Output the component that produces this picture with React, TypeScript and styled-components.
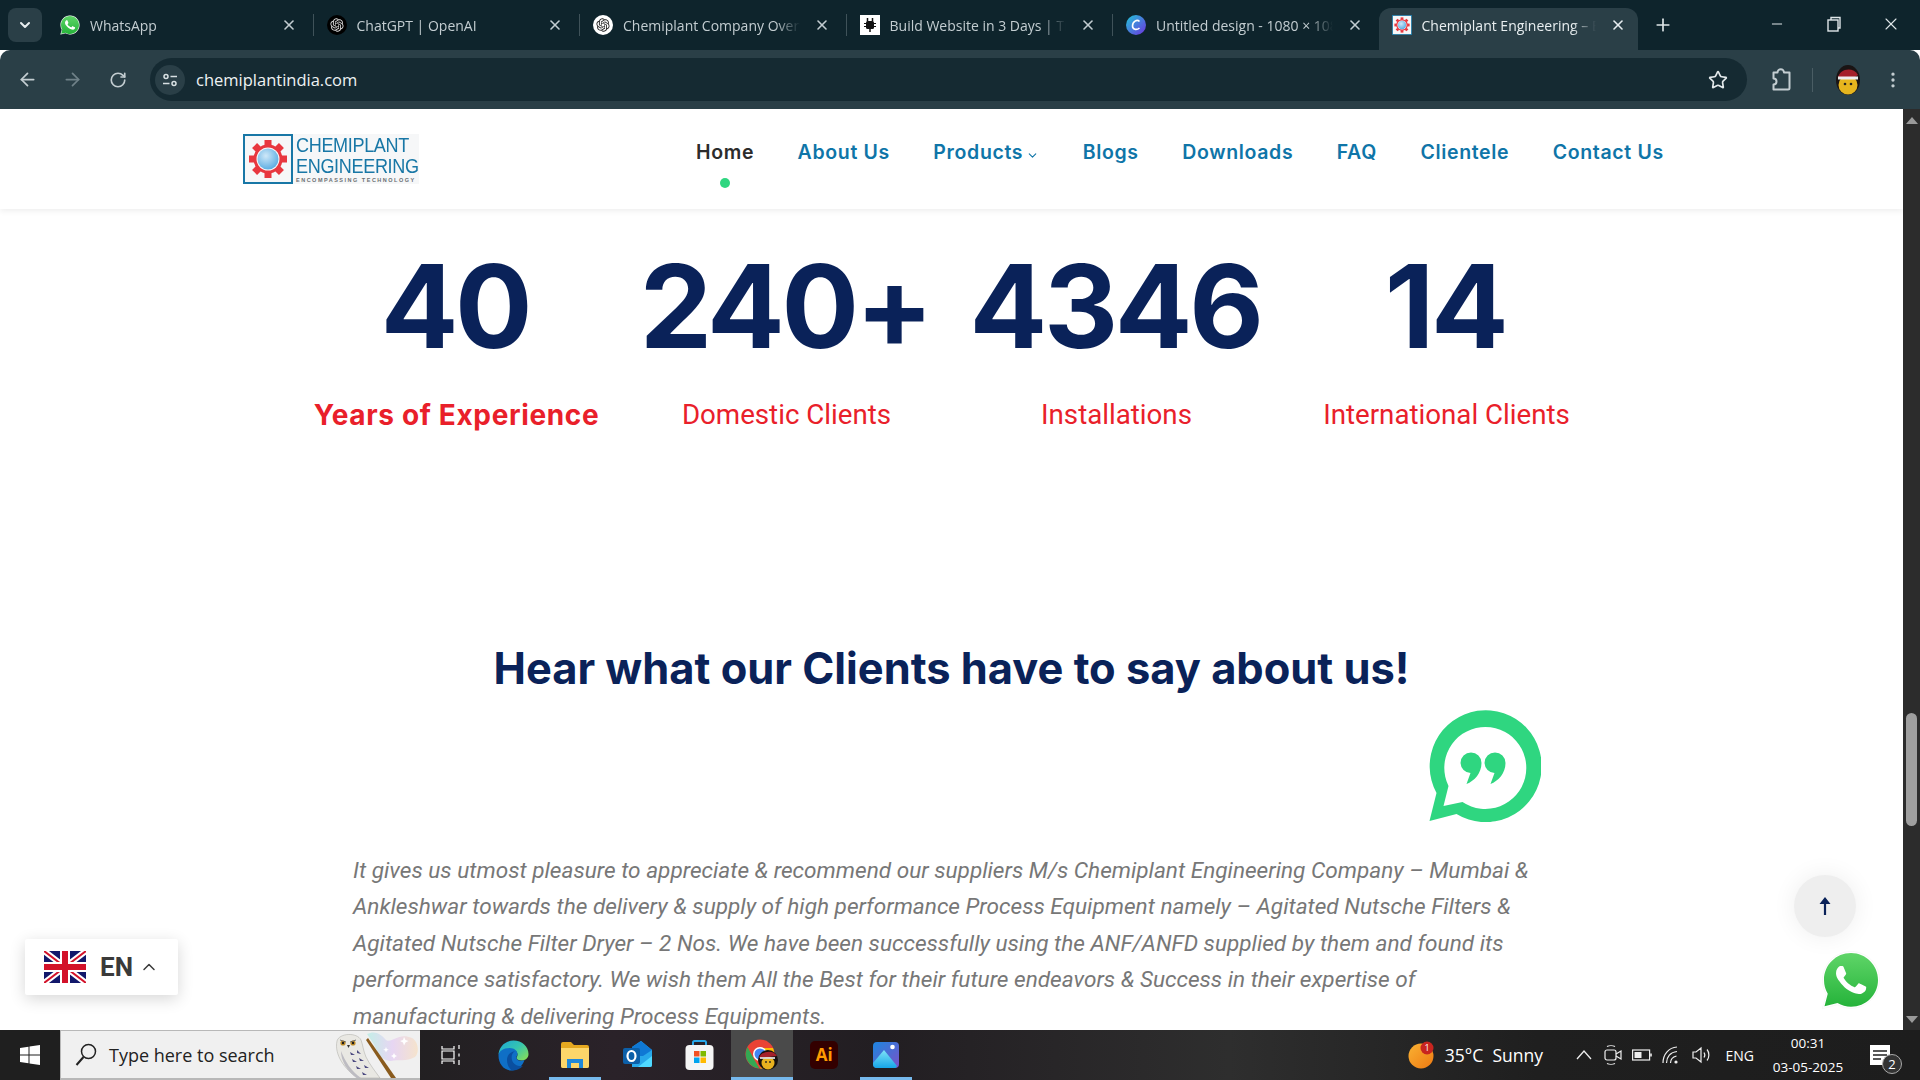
import styled, { createGlobalStyle } from 'styled-components';
import { ArrowLeft, ArrowRight, RotateCw, Star, MoreVertical, ChevronDown, ChevronUp, Plus, X, Minus } from 'lucide-react';
import { RiOpenaiFill } from 'react-icons/ri';

const GlobalStyle = createGlobalStyle`
  html, body { margin: 0; padding: 0; width: 1920px; height: 1080px; overflow: hidden; background: #fff; }
  * { box-sizing: border-box; }
`;

const Screen = styled.div`
  width: 1920px;
  height: 1080px;
  display: flex;
  flex-direction: column;
  overflow: hidden;
  font-family: "Roboto", sans-serif;
`;

/* browser chrome */
const TabStrip = styled.div`
  height: 50px;
  flex: none;
  background: #0e242c;
  display: flex;
  align-items: flex-end;
  padding-left: 8px;
`;

const TabMenu = styled.div`
  width: 34px;
  height: 34px;
  border-radius: 8px;
  background: #2a3f47;
  margin: 8px 5px 0 0;
  align-self: flex-start;
  display: flex;
  align-items: center;
  justify-content: center;
  color: #e8eef0;
`;

const Tab = styled.div<{ $active?: boolean; $sep?: boolean }>`
  width: ${(p) => (p.$active ? '259px' : '266.5px')};
  height: 42px;
  flex: none;
  display: flex;
  align-items: center;
  padding: 0 ${(p) => (p.$active ? '12px' : '17px')} 8px 13px;
  position: relative;
  color: #c3cdd1;
  border-radius: 12px 12px 0 0;
  background: ${(p) => (p.$active ? '#2a3f47' : 'transparent')};
  ${(p) => (p.$active ? 'color: #e8eef0; margin-left: -1px;' : '')}
  ${(p) =>
    p.$sep
      ? `&::after { content: ''; position: absolute; right: 0; top: 6px; width: 1px; height: 22px; background: #3f5259; }`
      : ''}
`;

const TabIcon = styled.div`
  width: 20px;
  height: 20px;
  flex: none;
  margin-right: 10px;
  display: flex;
  align-items: center;
  justify-content: center;
`;

const TabTitle = styled.div`
  flex: 1;
  min-width: 0;
  white-space: nowrap;
  overflow: hidden;
  font-family: "Open Sans", sans-serif;
  font-size: 14px;
  -webkit-mask-image: linear-gradient(to right, #000 86%, transparent 100%);
  mask-image: linear-gradient(to right, #000 86%, transparent 100%);
`;

const TabClose = styled(X)`
  width: 16px;
  height: 16px;
  flex: none;
  margin-left: 14px;
  stroke-width: 2.4;
`;

const NewTab = styled.div`
  width: 44px;
  height: 42px;
  margin-left: 3px;
  display: flex;
  align-items: center;
  justify-content: center;
  padding-bottom: 8px;
  color: #dfe6e8;
`;

const WindowControls = styled.div`
  margin-left: auto;
  display: flex;
  height: 50px;
  color: #dfe6e8;
  padding-right: 1px;
`;

const WindowButton = styled.div`
  width: 57px;
  display: flex;
  align-items: center;
  justify-content: center;
  padding-bottom: 2px;
`;

const Toolbar = styled.div`
  height: 59px;
  flex: none;
  background: #2a3f47;
  border-radius: 10px 10px 0 0;
  display: flex;
  align-items: center;
  color: #c3cdd1;
  padding-left: 5px;
`;

const NavButton = styled.div<{ $dim?: boolean }>`
  width: 45px;
  display: flex;
  justify-content: center;
  color: ${(p) => (p.$dim ? '#6f8188' : '#c3cdd1')};
`;

const Omnibox = styled.div`
  margin-left: 10px;
  width: 1597px;
  height: 43px;
  border-radius: 22px;
  background: #152a32;
  display: flex;
  align-items: center;
  padding: 0 19px 0 5px;
`;

const SiteChip = styled.div`
  width: 30px;
  height: 30px;
  border-radius: 50%;
  background: #2a3f47;
  display: flex;
  align-items: center;
  justify-content: center;
  margin-right: 11px;
`;

const UrlText = styled.div`
  flex: 1;
  font-family: "Open Sans", sans-serif;
  font-size: 16.5px;
  color: #eef2f3;
`;

const ToolbarIcons = styled.div`
  display: flex;
  align-items: center;
  margin-left: 24px;
`;

const ToolbarDivider = styled.div`
  width: 1px;
  height: 24px;
  background: #4a5d64;
  margin: 0 22px 0 21px;
`;

const Avatar = styled.svg`
  width: 26px;
  height: 30px;
  margin-right: 22px;
`;

/* page area */
const Viewport = styled.div`
  flex: 1;
  min-height: 0;
  display: flex;
`;

const Page = styled.div`
  flex: 1;
  min-width: 0;
  position: relative;
  overflow: hidden;
  background: #fff;
`;

const Header = styled.header`
  height: 100px;
  background: #fff;
  box-shadow: 0 2px 6px rgba(0, 0, 0, 0.07);
  display: flex;
  align-items: flex-start;
  padding: 25px 0 0 243px;
`;

const Logo = styled.div`
  width: 176px;
  height: 50px;
  flex: none;
  display: flex;
  background: #f6f7f8;
`;

const LogoMark = styled.svg`
  width: 50px;
  height: 50px;
  flex: none;
`;

const LogoText = styled.div`
  margin-left: 3px;
  padding-top: 1px;
  display: flex;
  flex-direction: column;
  color: #1877a6;
  font-family: "Liberation Sans", sans-serif;
  white-space: nowrap;
`;

const LogoLine = styled.div`
  font-size: 21px;
  line-height: 20.5px;
  letter-spacing: -0.4px;
  transform: scaleX(0.86);
  transform-origin: left center;
`;

const LogoTagline = styled.div`
  font-size: 5.5px;
  font-weight: 700;
  line-height: 8px;
  letter-spacing: 1.5px;
  color: #6b6f73;
`;

const Nav = styled.nav`
  display: flex;
  gap: 43.5px;
  margin-left: 277px;
  padding-top: 3px;
`;

const NavItem = styled.a<{ $active?: boolean }>`
  position: relative;
  font-family: "Inter", sans-serif;
  font-size: 19.5px;
  font-weight: 600;
  letter-spacing: 0.65px;
  line-height: 30px;
  white-space: nowrap;
  display: flex;
  align-items: center;
  color: ${(p) => (p.$active ? '#2c2c2c' : '#0f75a8')};
  ${(p) =>
    p.$active
      ? `&::after { content: ''; position: absolute; left: 50%; top: 41px; width: 10px; height: 10px; margin-left: -5px; border-radius: 50%; background: #2fd680; }`
      : ''}
`;

const Stats = styled.section`
  width: 1320px;
  margin: 30px auto 0;
  display: grid;
  grid-template-columns: repeat(4, 330px);
`;

const Stat = styled.div`
  display: flex;
  flex-direction: column;
  align-items: center;
`;

const StatValue = styled.div`
  font-family: "Inter", sans-serif;
  font-size: 115px;
  font-weight: 700;
  line-height: 136px;
  letter-spacing: -3.4px;
  padding-right: 3px;
  color: #0a2259;
  white-space: nowrap;
`;

const StatLabel = styled.div<{ $bold?: boolean }>`
  margin-top: 20px;
  color: #e9202a;
  white-space: nowrap;
  line-height: 40px;
  font-size: ${(p) => (p.$bold ? '28px' : '27.7px')};
  font-weight: ${(p) => (p.$bold ? 700 : 400)};
  letter-spacing: ${(p) => (p.$bold ? '0.65px' : '0')};
  font-family: ${(p) => (p.$bold ? '"Inter", sans-serif' : '"Roboto", sans-serif')};
`;

const Testimonials = styled.section`
  display: flex;
  flex-direction: column;
`;

const Heading = styled.h2`
  margin: 206px 0 0;
  font-family: "Inter", sans-serif;
  font-size: 43.4px;
  font-weight: 700;
  line-height: 54px;
  text-align: center;
  color: #0a2259;
  white-space: nowrap;
`;

const QuoteRow = styled.div`
  display: flex;
  justify-content: flex-end;
  padding-right: 362px;
  margin-top: 14px;
`;

const QuoteText = styled.p`
  margin: 31px 0 0 353px;
  width: 1190px;
  font-family: "Roboto", sans-serif;
  font-style: italic;
  font-weight: 400;
  font-size: 22.6px;
  line-height: 36.4px;
  color: #777;
`;

const LangButton = styled.div`
  position: absolute;
  left: 25px;
  bottom: 35px;
  width: 153px;
  height: 56px;
  background: #fff;
  box-shadow: 0 4px 16px rgba(0, 0, 0, 0.16);
  display: flex;
  align-items: center;
  padding-left: 19px;
  border-radius: 2px;
  color: #3a3a3a;
`;

const LangCode = styled.span`
  font-family: "Roboto", sans-serif;
  font-weight: 700;
  font-size: 26px;
  margin: 0 6px 0 14px;
`;

const ScrollTop = styled.div`
  position: absolute;
  left: 1794px;
  top: 766px;
  width: 62px;
  height: 62px;
  border-radius: 50%;
  background: #eee;
  box-shadow: 0 0 24px rgba(0, 0, 0, 0.07);
  display: flex;
  align-items: center;
  justify-content: center;
`;

const WhatsAppFloat = styled.div`
  position: absolute;
  left: 1821px;
  top: 841px;
  width: 60px;
  height: 60px;
`;

const Scrollbar = styled.div`
  width: 17px;
  flex: none;
  background: #2c2c2c;
  display: flex;
  flex-direction: column;
  align-items: center;
  padding-top: 8px;
`;

const ScrollArrow = styled.div<{ $down?: boolean }>`
  width: 0;
  height: 0;
  border-left: 6px solid transparent;
  border-right: 6px solid transparent;
  ${(p) => (p.$down ? 'border-top: 7px solid #9a9a9a; margin-top: auto; margin-bottom: 7px;' : 'border-bottom: 7px solid #9a9a9a;')}
`;

const ScrollThumb = styled.div`
  width: 11px;
  height: 113px;
  border-radius: 6px;
  background: #9f9f9f;
  margin-top: 589px;
`;

/* taskbar */
const Taskbar = styled.div`
  height: 50px;
  flex: none;
  display: flex;
  align-items: stretch;
  color: #fff;
  background: linear-gradient(90deg, #1f1f1f 0%, #1f1f1f 18%, #2a2229 32%, #221e22 46%, #2e2e2e 64%, #1f1f1f 80%, #1d1d1d 100%);
`;

const StartButton = styled.div`
  width: 60px;
  display: flex;
  align-items: center;
  justify-content: center;
`;

const SearchBox = styled.div`
  width: 360px;
  background: #f0f0f0;
  border: 1px solid #b8b8b8;
  border-bottom-width: 2px;
  border-right: 0;
  display: flex;
  align-items: center;
  padding-left: 14px;
  color: #222;
  overflow: hidden;
`;

const SearchText = styled.span`
  font-family: "Open Sans", sans-serif;
  font-size: 18px;
  margin-left: 12px;
  flex: 1;
  white-space: nowrap;
`;

const TaskIcons = styled.div`
  display: flex;
`;

const TaskIcon = styled.div<{ $open?: boolean; $focus?: boolean }>`
  width: 62.2px;
  display: flex;
  align-items: center;
  justify-content: center;
  position: relative;
  background: ${(p) => (p.$focus ? '#4a4a4a' : 'transparent')};
  ${(p) =>
    p.$open
      ? `&::after { content: ''; position: absolute; left: ${p.$focus ? 0 : '5px'}; right: ${p.$focus ? 0 : '6px'}; bottom: 0; height: 3px; background: #76b9ed; }`
      : ''}
`;

const Tray = styled.div`
  margin-left: auto;
  display: flex;
  align-items: center;
  font-family: "Open Sans", sans-serif;
`;

const Weather = styled.span`
  font-size: 17.5px;
  margin: 0 31px 0 11px;
  white-space: nowrap;
`;

const TrayIcons = styled.div`
  display: flex;
  align-items: center;
  gap: 10px;
  color: #eee;
`;

const TrayLang = styled.span`
  font-size: 14px;
  margin: 0 16px 0 13.5px;
`;

const Clock = styled.div`
  font-size: 13.5px;
  line-height: 24px;
  text-align: center;
  width: 76px;
`;

const Notify = styled.div`
  position: relative;
  width: 50px;
  margin-left: 9px;
  margin-right: 15px;
  display: flex;
  justify-content: center;
`;

const NotifyBadge = styled.span`
  position: absolute;
  left: 27px;
  top: 9px;
  width: 20px;
  height: 20px;
  border-radius: 50%;
  background: #333;
  border: 1px solid #aaa;
  font-size: 13px;
  line-height: 18px;
  text-align: center;
`;

const AiTile = styled.div`
  width: 28px;
  height: 28px;
  border-radius: 5px;
  background: #330000;
  color: #ff9a00;
  font-family: "Open Sans", sans-serif;
  font-weight: 700;
  font-size: 17px;
  line-height: 28px;
  text-align: center;
`;

const GptCircle = styled.div<{ $dark?: boolean }>`
  width: 20px;
  height: 20px;
  border-radius: 50%;
  display: flex;
  align-items: center;
  justify-content: center;
  background: ${(p) => (p.$dark ? '#000' : '#fff')};
  color: ${(p) => (p.$dark ? '#ddd' : '#222')};
`;

/* drawings */
function GptIcon({ dark }: { dark?: boolean }) {
  return (
    <GptCircle $dark={dark}>
      <RiOpenaiFill size={16} />
    </GptCircle>
  );
}

const WaBubble = ({ size = 20 }: { size?: number }) => (
  <svg width={size} height={size} viewBox="0 0 24 24">
    <path fill="#fff" stroke="#ececec" strokeWidth="0.15" d="M12 .6C5.700.6.600 5.700.600 12c0 2 .5 4 1.500 5.700L.5 23.500l6-1.600c1.700.9 3.600 1.400 5.500 1.400 6.300 0 11.400-5.100 11.400-11.400S18.300.6 12 .6z" />
    <path fill="url(#wa)" d="M12 1.200C6 1.200 1.200 6 1.200 12c0 2 .5 3.900 1.500 5.500L1.400 22.500l5.200-1.300c1.600.9 3.500 1.500 5.400 1.500 6 0 10.800-4.800 10.800-10.700S18 1.200 12 1.200z" />
    <path fill="#fff" d="M17.472 14.382c-.297-.149-1.758-.867-2.03-.967-.273-.099-.471-.148-.67.15-.197.297-.767.966-.94 1.164-.173.199-.347.223-.644.075-.297-.15-1.255-.463-2.39-1.475-.883-.788-1.48-1.761-1.653-2.059-.173-.297-.018-.458.13-.606.134-.133.298-.347.446-.52.149-.174.198-.298.298-.497.099-.198.05-.371-.025-.52-.075-.149-.669-1.612-.916-2.207-.242-.579-.487-.5-.669-.51-.173-.008-.371-.01-.57-.01-.198 0-.52.074-.792.372-.272.297-1.04 1.016-1.04 2.479 0 1.462 1.065 2.875 1.213 3.074.149.198 2.096 3.2 5.077 4.487.709.306 1.262.489 1.694.625.712.227 1.36.195 1.871.118.571-.085 1.758-.719 2.006-1.413.248-.694.248-1.289.173-1.413-.074-.124-.272-.198-.57-.347" />
  </svg>
);

const gearTeeth = [0, 45, 90, 135, 180, 225, 270, 315];

const Gear = ({ size = 50 }: { size?: number }) => (
  <LogoMark viewBox="0 0 50 50" style={{ width: size, height: size }}>
    <rect x="1" y="1" width="48" height="48" fill="#f6f7f8" stroke="#1877a6" strokeWidth="2" />
    {gearTeeth.map((a) => (
      <rect key={a} x="21.500" y="6" width="7" height="6" fill="#e8373f" transform={`rotate(${a} 25 25)`} />
    ))}
    <circle cx="25" cy="25" r="14.500" fill="#e8373f" />
    <circle cx="25" cy="25" r="11.500" fill="#f6f7f8" />
    <circle cx="25" cy="25" r="10.500" fill="url(#globe)" />
  </LogoMark>
);

const Windows = () => (
  <svg width="22" height="22" viewBox="0 0 22 22" fill="#fff">
    <path d="M1 4l8.500-1.200v7.700H1zM10.500 2.600L21 1v9.500H10.500zM1 11.500h8.500v7.700L1 18zM10.500 11.500H21V21l-10.500-1.500z" />
  </svg>
);

const Magnifier = () => (
  <svg width="22" height="24" viewBox="0 0 22 24" fill="none" stroke="#222" strokeWidth="1.500">
    <circle cx="13.500" cy="8.500" r="7" />
    <path d="M8.500 14L1.500 22" strokeWidth="2" />
  </svg>
);

const Owl = () => (
  <svg width="87" height="47" viewBox="0 0 87 47">
    <defs>
      <linearGradient id="swirl" x1="0" y1="0" x2="1" y2="0">
        <stop offset="0" stopColor="#bfeee6" />
        <stop offset="0.5" stopColor="#e6d3f3" />
        <stop offset="1" stopColor="#f6e2c9" />
      </linearGradient>
    </defs>
    <path d="M34 3c8-4 14 0 19 6 6 4 12-8 26-2 6 3 8 14 3 19-9 5-17 2-24 4-6 0-12-4-15-12-2-6-6-10-9-15z" fill="url(#swirl)" opacity="0.9" />
    <path d="M71 6l1.500 3 3 1-3 1.500-1.500 3-1-3-3-1.500 3-1zM61 22l1 2 2 1-2 1-1 2-1-2-2-1 2-1zM53 16l.8 2 2 .8-2 .8-.8 2-.8-2-2-.8 2-.8z" fill="#fff" />
    <path d="M35 7l28 40h-5L33 9z" fill="#8a5b1d" />
    <path d="M4 10c2-8 20-9 24-1 2 5 2 10 5 17 4 8 9 14 14 21H24C12 38 1 24 4 10z" fill="#e9e8e3" stroke="#a9a8a2" strokeWidth="0.5" />
    <path d="M8 20c4 10 10 20 20 27h-4C14 40 8 30 8 20z" fill="#bdbcc2" />
    <circle cx="10" cy="12" r="2.600" fill="#c28f2c" />
    <circle cx="20" cy="12" r="2.600" fill="#c28f2c" />
    <circle cx="10" cy="12" r="1.200" fill="#1b1b1b" />
    <circle cx="20" cy="12" r="1.200" fill="#1b1b1b" />
    <path d="M7 9l6 2M23 9l-6 2" stroke="#555" strokeWidth="0.8" />
    <path d="M14 14l1.500 3 1.500-3z" fill="#333" />
    <path d="M17 21l5 3-4 0zM24 19l4 4-4-1zM19 28l5 3-4 0zM26 27l5 3-4 0zM23 35l5 3-4 0zM31 34l5 3-4 0zM29 41l5 3-4 0z" fill="#4c4a80" />
  </svg>
);

const Edge = () => (
  <svg width="31" height="31" viewBox="0 0 31 31">
    <defs>
      <linearGradient id="edgeA" x1="0" y1="0" x2="1" y2="0.8">
        <stop offset="0" stopColor="#1ba6d8" />
        <stop offset="0.55" stopColor="#35c5b0" />
        <stop offset="1" stopColor="#7fdc5f" />
      </linearGradient>
    </defs>
    <path d="M.5 15.500C.5 7 7 .5 15.500.5 24 .5 30.500 6.500 30.500 14c0 4-3 6.500-7 6.500-3 0-5-1-5-2.500 0-1 1-1.500 1-3.500 0-3-3-5-6.500-5C7 9.500.5 12 .5 15.500z" fill="url(#edgeA)" />
    <path d="M.5 15.500c0-4 5-7.500 11-7.500 5 0 8 3 8 6 0 1-.7 2-1 3-.8 3.500 4 4.500 8 3-2 6-7 10.500-13 10.500C6 30.500.5 24 .5 15.500z" fill="#0f6fc6" />
    <path d="M9 20c0-5 3-8 8-9-3 2-4 5-3 9 1 4 6 7 11 6-3 3-7 4.500-11 4.500-3-2-5-6-5-10.500z" fill="#0a4fa0" />
  </svg>
);

const Explorer = () => (
  <svg width="28" height="26" viewBox="0 0 28 26">
    <path d="M0 2a2 2 0 0 1 2-2h8l3 3h13a2 2 0 0 1 2 2v19a2 2 0 0 1-2 2H2a2 2 0 0 1-2-2z" fill="#e5a820" />
    <path d="M0 6h28v18a2 2 0 0 1-2 2H2a2 2 0 0 1-2-2z" fill="#fcd66a" />
    <path d="M6 26V17h16v9h-4v-5h-8v5z" fill="#1f88d9" />
  </svg>
);

const Outlook = () => (
  <svg width="30" height="28" viewBox="0 0 30 28">
    <path d="M9 6l9-6 11 9v15a2 2 0 0 1-2 2H9z" fill="#28a8ea" />
    <path d="M9 6l9-6 11 9-9 6H9z" fill="#0f78d4" />
    <path d="M15 26l14-11v9a2 2 0 0 1-2 2z" fill="#50d9ff" />
    <rect x="0" y="7" width="17" height="16" rx="2" fill="#0c5fa8" />
    <ellipse cx="8.500" cy="15" rx="4" ry="5" fill="none" stroke="#fff" strokeWidth="2.200" />
  </svg>
);

const Store = () => (
  <svg width="29" height="30" viewBox="0 0 29 30">
    <path d="M8 8V2.500a1.500 1.500 0 0 1 1.500-1.500h10a1.500 1.500 0 0 1 1.500 1.500V8" fill="none" stroke="#28a8ea" strokeWidth="2" />
    <rect x="0.500" y="5" width="28" height="25" rx="4" fill="#f5f5f5" />
    <rect x="9" y="11" width="5.500" height="5.500" fill="#f25022" />
    <rect x="15.500" y="11" width="5.500" height="5.500" fill="#7fba00" />
    <rect x="9" y="17.500" width="5.500" height="5.500" fill="#00a4ef" />
    <rect x="15.500" y="17.500" width="5.500" height="5.500" fill="#ffb900" />
  </svg>
);

const Chrome = () => (
  <svg width="34" height="32" viewBox="0 0 34 32">
    <circle cx="15" cy="15" r="14.500" fill="#ea4335" />
    <path d="M2.500 8l7 13 5 8.500A14.500 14.500 0 0 1 2.500 8z" fill="#34a853" />
    <path d="M15 9h13a14.500 14.500 0 0 1-13 20.500l6-10z" fill="#fbbc04" />
    <circle cx="15" cy="15" r="7" fill="#fff" />
    <circle cx="15" cy="15" r="5.500" fill="#4285f4" />
    <circle cx="23" cy="21" r="10" fill="#15110f" />
    <circle cx="23" cy="24" r="6.500" fill="#e8b21f" />
    <path d="M14 19c1-7 15-9 18-2z" fill="#a5202a" />
    <path d="M15 19h15" stroke="#ddd" strokeWidth="1.800" />
    <circle cx="21" cy="23" r="0.900" fill="#222" />
    <circle cx="25" cy="23" r="0.900" fill="#222" />
  </svg>
);

const Photos = () => (
  <svg width="26" height="26" viewBox="0 0 26 26">
    <defs>
      <linearGradient id="photoBg" x1="0" y1="0" x2="1" y2="1">
        <stop offset="0" stopColor="#1c86e0" />
        <stop offset="1" stopColor="#7a52c8" />
      </linearGradient>
      <linearGradient id="photoHill" x1="0" y1="0" x2="0" y2="1">
        <stop offset="0" stopColor="#7fe3f7" />
        <stop offset="1" stopColor="#16a6e8" />
      </linearGradient>
    </defs>
    <rect width="26" height="26" rx="4" fill="url(#photoBg)" />
    <path d="M0 21l11-13 13 16a3 3 0 0 1-2 2H4a4 4 0 0 1-4-4z" fill="url(#photoHill)" />
    <circle cx="19.500" cy="5" r="2.300" fill="#fff" />
  </svg>
);

const SiteChipIcon = () => (
  <svg width="16" height="16" viewBox="0 0 16 16" fill="none" stroke="#d8e0e3" strokeWidth="1.500">
    <circle cx="4" cy="4.500" r="2" />
    <path d="M8.500 4.500H15M1 11.500h6.500" />
    <circle cx="12" cy="11.500" r="2" />
  </svg>
);

const ExtensionIcon = () => (
  <svg width="20" height="24" viewBox="0 0 20 24" fill="none" stroke="#c3cdd1" strokeWidth="2" strokeLinejoin="round">
    <path d="M6.500 4.500a3 3 0 0 1 6.500 0h5.500v15.500a1.500 1.500 0 0 1-1.500 1.500H2.500v-5a2.500 2.500 0 0 0 0-6v-6z" />
  </svg>
);

const stats = [
  { value: '40', label: 'Years of Experience', bold: true },
  { value: '240+', label: 'Domestic Clients' },
  { value: '4346', label: 'Installations' },
  { value: '14', label: 'International Clients' },
];

const navItems = ['Home', 'About Us', 'Products', 'Blogs', 'Downloads', 'FAQ', 'Clientele', 'Contact Us'];

export default function App() {
  return (
    <Screen>
      <GlobalStyle />
      <svg width="0" height="0" style={{ position: 'absolute' }}>
        <defs>
          <linearGradient id="wa" x1="0" y1="0" x2="0" y2="1">
            <stop offset="0" stopColor="#5fd568" />
            <stop offset="1" stopColor="#25b33a" />
          </linearGradient>
          <radialGradient id="globe" cx="0.4" cy="0.35" r="0.75">
            <stop offset="0" stopColor="#cfe8f8" />
            <stop offset="1" stopColor="#4ea6e0" />
          </radialGradient>
        </defs>
      </svg>
      <TabStrip>
        <TabMenu>
          <ChevronDown size={16} strokeWidth={3} />
        </TabMenu>
        <Tab $sep>
          <TabIcon><WaBubble size={22} /></TabIcon>
          <TabTitle>WhatsApp</TabTitle>
          <TabClose />
        </Tab>
        <Tab $sep>
          <TabIcon><GptIcon dark /></TabIcon>
          <TabTitle>ChatGPT | OpenAI</TabTitle>
          <TabClose />
        </Tab>
        <Tab $sep>
          <TabIcon><GptIcon /></TabIcon>
          <TabTitle>Chemiplant Company Overview</TabTitle>
          <TabClose />
        </Tab>
        <Tab $sep>
          <TabIcon>
            <svg width="20" height="20" viewBox="0 0 20 20">
              <rect width="20" height="20" fill="#fff" />
              <path d="M7.500 3v3M12.500 3v3M10 14v3" stroke="#111" strokeWidth="1.500" />
              <rect x="6" y="6" width="8" height="8" rx="1.500" fill="#111" />
              <path d="M4 8.500h12M4 11.500h12" stroke="#111" strokeWidth="1" />
            </svg>
          </TabIcon>
          <TabTitle>Build Website in 3 Days | Tilda</TabTitle>
          <TabClose />
        </Tab>
        <Tab>
          <TabIcon>
            <svg width="20" height="20" viewBox="0 0 20 20">
              <defs>
                <linearGradient id="canva" x1="0" y1="0" x2="1" y2="1">
                  <stop offset="0" stopColor="#1fc8d8" />
                  <stop offset="1" stopColor="#7030e0" />
                </linearGradient>
              </defs>
              <circle cx="10" cy="10" r="10" fill="url(#canva)" />
              <path d="M13.500 6.500C11 4 6.500 6.500 6.500 11c0 3.500 4 4.500 7 2" fill="none" stroke="#fff" strokeWidth="1.600" />
            </svg>
          </TabIcon>
          <TabTitle>Untitled design - 1080 × 1080px</TabTitle>
          <TabClose />
        </Tab>
        <Tab $active>
          <TabIcon><Gear size={20} /></TabIcon>
          <TabTitle>Chemiplant Engineering – Encompassing</TabTitle>
          <TabClose />
        </Tab>
        <NewTab>
          <Plus size={20} />
        </NewTab>
        <WindowControls>
          <WindowButton><Minus size={16} strokeWidth={1.500} /></WindowButton>
          <WindowButton>
            <svg width="16" height="16" viewBox="0 0 16 16" fill="none" stroke="currentColor" strokeWidth="1.400">
              <rect x="2" y="4" width="10" height="11" />
              <path d="M5 4V1.500h9V12h-2" />
            </svg>
          </WindowButton>
          <WindowButton><X size={20} strokeWidth={1.300} /></WindowButton>
        </WindowControls>
      </TabStrip>

      <Toolbar>
        <NavButton><ArrowLeft size={21} /></NavButton>
        <NavButton $dim><ArrowRight size={21} /></NavButton>
        <NavButton><RotateCw size={18} strokeWidth={2.200} /></NavButton>
        <Omnibox>
          <SiteChip><SiteChipIcon /></SiteChip>
          <UrlText>chemiplantindia.com</UrlText>
          <Star size={20} color="#e3e9eb" />
        </Omnibox>
        <ToolbarIcons>
          <ExtensionIcon />
          <ToolbarDivider />
          <Avatar viewBox="0 0 26 30">
            <ellipse cx="13" cy="15" rx="12" ry="15" fill="#1a1414" />
            <circle cx="13" cy="20" r="9.500" fill="#e6b51e" />
            <path d="M3 13c1-9 15-12 20-3l-3 2z" fill="#a5202a" />
            <path d="M3 13h20" stroke="#eee" strokeWidth="3" />
            <circle cx="10" cy="19" r="1.300" fill="#222" />
            <circle cx="16" cy="19" r="1.300" fill="#222" />
          </Avatar>
          <MoreVertical size={20} />
        </ToolbarIcons>
      </Toolbar>

      <Viewport>
        <Page>
          <Header>
            <Logo>
              <Gear />
              <LogoText>
                <LogoLine>CHEMIPLANT</LogoLine>
                <LogoLine>ENGINEERING</LogoLine>
                <LogoTagline>ENCOMPASSING TECHNOLOGY</LogoTagline>
              </LogoText>
            </Logo>
            <Nav>
              {navItems.map((item) => (
                <NavItem key={item} $active={item === 'Home'}>
                  {item}
                  {item === 'Products' && <ChevronDown size={13} strokeWidth={2} style={{ marginLeft: 3, marginTop: 6 }} />}
                </NavItem>
              ))}
            </Nav>
          </Header>

          <Stats>
            {stats.map((s) => (
              <Stat key={s.value}>
                <StatValue>{s.value}</StatValue>
                <StatLabel $bold={s.bold}>{s.label}</StatLabel>
              </Stat>
            ))}
          </Stats>

          <Testimonials>
            <Heading>Hear what our Clients have to say about us!</Heading>
            <QuoteRow>
              <svg width="113" height="113" viewBox="0 0 112 113">
                <path
                  fill="#2fd680"
                  fillRule="evenodd"
                  d="M1 112L8 84A56 56 0 1 1 28 105ZM20 77L15 97L34 93A41 41 0 1 0 20 77Z"
                />
                <path
                  fill="#2fd680"
                  d="M32 54a10.500 10.500 0 1 1 21 0c0 10-7 18-15 21l4-11a10.500 10.500 0 0 1-10-10zM56 54a10.500 10.500 0 1 1 21 0c0 10-7 18-15 21l4-11a10.500 10.500 0 0 1-10-10z"
                />
              </svg>
            </QuoteRow>
            <QuoteText>
              It gives us utmost pleasure to appreciate &amp; recommend our suppliers M/s Chemiplant Engineering Company – Mumbai &amp; Ankleshwar towards the delivery &amp; supply of high performance Process Equipment namely – Agitated Nutsche Filters &amp; Agitated Nutsche Filter Dryer – 2 Nos. We have been successfully using the ANF/ANFD supplied by them and found its performance satisfactory. We wish them All the Best for their future endeavors &amp; Success in their expertise of manufacturing &amp; delivering Process Equipments.
            </QuoteText>
          </Testimonials>

          <LangButton>
            <svg width="42" height="32" viewBox="0 0 42 32">
              <rect width="42" height="32" rx="3" fill="#12186b" />
              <path d="M0 0L42 32M42 0L0 32" stroke="#fff" strokeWidth="6" />
              <path d="M0 0L42 32M42 0L0 32" stroke="#d3122a" strokeWidth="2" />
              <path d="M21 0v32M0 16h42" stroke="#fff" strokeWidth="10" />
              <path d="M21 0v32M0 16h42" stroke="#d3122a" strokeWidth="6" />
            </svg>
            <LangCode>EN</LangCode>
            <ChevronUp size={20} strokeWidth={1.800} />
          </LangButton>
          <ScrollTop>
            <svg width="14" height="20" viewBox="0 0 14 20" fill="#0a2259">
              <path d="M7 1l5.500 7H8.100v11H5.900V8H1.500z" />
            </svg>
          </ScrollTop>
          <WhatsAppFloat>
            <WaBubble size={60} />
          </WhatsAppFloat>
        </Page>
        <Scrollbar>
          <ScrollArrow />
          <ScrollThumb />
          <ScrollArrow $down />
        </Scrollbar>
      </Viewport>

      <Taskbar>
        <StartButton><Windows /></StartButton>
        <SearchBox>
          <Magnifier />
          <SearchText>Type here to search</SearchText>
          <Owl />
        </SearchBox>
        <TaskIcons>
          <TaskIcon>
            <svg width="20" height="20" viewBox="0 0 20 20" fill="none" stroke="#fff" strokeWidth="1.200">
              <path d="M1 1v3h12V1M1 19v-3h12v3M1 6h12v8H1zM18 0v4M18 8.500v3M18 15v5" />
            </svg>
          </TaskIcon>
          <TaskIcon><Edge /></TaskIcon>
          <TaskIcon $open><Explorer /></TaskIcon>
          <TaskIcon><Outlook /></TaskIcon>
          <TaskIcon><Store /></TaskIcon>
          <TaskIcon $open $focus><Chrome /></TaskIcon>
          <TaskIcon><AiTile>Ai</AiTile></TaskIcon>
          <TaskIcon $open><Photos /></TaskIcon>
        </TaskIcons>
        <Tray>
          <svg width="26" height="28" viewBox="0 0 26 28">
            <defs>
              <linearGradient id="sun" x1="0" y1="0" x2="1" y2="1">
                <stop offset="0" stopColor="#f9b233" />
                <stop offset="1" stopColor="#ee7a12" />
              </linearGradient>
            </defs>
            <circle cx="13" cy="15" r="12.500" fill="url(#sun)" />
            <circle cx="19" cy="7" r="6.500" fill="#c8251f" />
            <text x="19" y="10" fontSize="9" fill="#fff" textAnchor="middle" fontFamily="Open Sans">1</text>
          </svg>
          <Weather>35°C&nbsp;&nbsp;Sunny</Weather>
          <TrayIcons>
            <svg width="20" height="20" viewBox="0 0 20 20" fill="none" stroke="#eee" strokeWidth="1.300">
              <path d="M3 14l7-8 7 8" />
            </svg>
            <svg width="18" height="20" viewBox="0 0 18 20" fill="none" stroke="#eee" strokeWidth="1.200">
              <path d="M3 1.500c2-1 6-1 8 0M3 18.500c2 1 6 1 8 0" />
              <rect x="1" y="5" width="11" height="10" rx="2" />
              <path d="M12 9l5-3v8l-5-3" />
            </svg>
            <svg width="20" height="20" viewBox="0 0 20 20" fill="none" stroke="#eee" strokeWidth="1.200">
              <rect x="0.600" y="5" width="17" height="10" />
              <rect x="2.500" y="7" width="7" height="6" fill="#eee" stroke="none" />
              <path d="M19 8.500v3" strokeWidth="1.600" />
            </svg>
            <svg width="20" height="20" viewBox="0 0 20 20" fill="none" stroke="#eee" strokeWidth="1.200">
              <path d="M1 18C1 9 7 2.500 15 2M4.500 18c0-6 4-11 10.500-11.500M8.500 18c0-3 2-6 6-7" />
              <circle cx="14" cy="17" r="1.600" fill="#eee" stroke="none" />
            </svg>
            <svg width="20" height="20" viewBox="0 0 20 20" fill="none" stroke="#eee" strokeWidth="1.200">
              <path d="M1 7h3l5-4v14l-5-4H1zM12 7.500c1 1.500 1 3.500 0 5M15 4.500c2.500 3 2.500 8 0 11" />
            </svg>
          </TrayIcons>
          <TrayLang>ENG</TrayLang>
          <Clock>
            <div>00:31</div>
            <div>03-05-2025</div>
          </Clock>
          <Notify>
            <svg width="20" height="20" viewBox="0 0 20 20">
              <rect width="20" height="20" fill="#fff" />
              <path d="M3 6h14M3 10h14M3 14h8" stroke="#222" strokeWidth="1.500" />
            </svg>
            <NotifyBadge>2</NotifyBadge>
          </Notify>
        </Tray>
      </Taskbar>
    </Screen>
  );
}
